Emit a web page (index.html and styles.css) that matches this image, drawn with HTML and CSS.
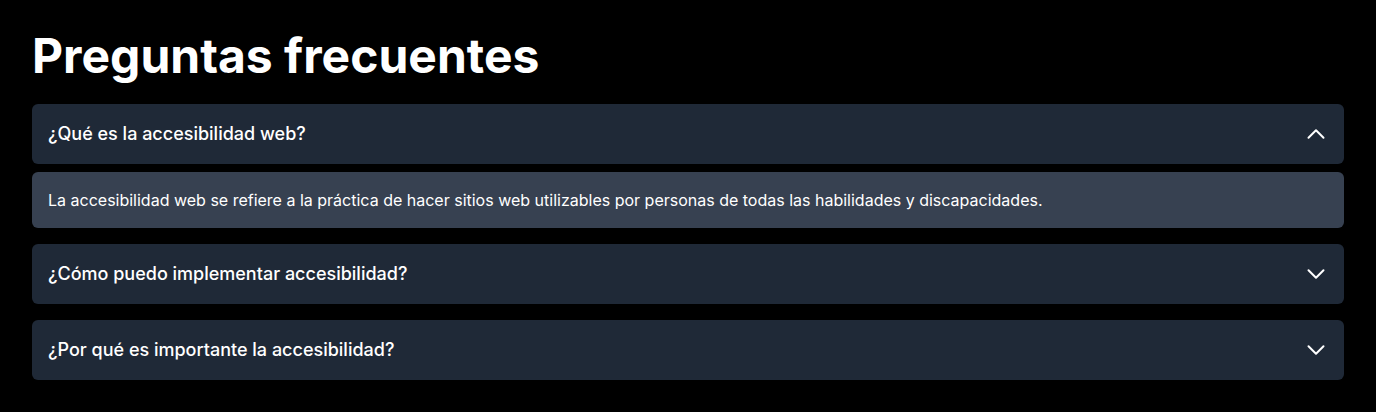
FILE: index.html
```html
<!DOCTYPE html>
<html lang="es">
<head>
<meta charset="utf-8">
<link rel="stylesheet" href="styles.css">
</head>
<body>
<main class="page">
  <h1 class="title">Preguntas frecuentes</h1>
  <div class="faq">
    <div class="item">
      <button class="question" aria-expanded="true">
        <span>¿Qué es la accesibilidad web?</span>
        <svg class="chev" viewBox="0 0 24 24" fill="none" stroke="currentColor" stroke-width="2" stroke-linecap="round" stroke-linejoin="round"><path d="M4.5 15.75l7.5-7.5 7.5 7.5"/></svg>
      </button>
      <div class="answer">La accesibilidad web se refiere a la práctica de hacer sitios web utilizables por personas de todas las habilidades y discapacidades.</div>
    </div>
    <div class="item">
      <button class="question" aria-expanded="false">
        <span>¿Cómo puedo implementar accesibilidad?</span>
        <svg class="chev" viewBox="0 0 24 24" fill="none" stroke="currentColor" stroke-width="2" stroke-linecap="round" stroke-linejoin="round"><path d="M19.5 8.25l-7.5 7.5-7.5-7.5"/></svg>
      </button>
    </div>
    <div class="item">
      <button class="question" aria-expanded="false">
        <span>¿Por qué es importante la accesibilidad?</span>
        <svg class="chev" viewBox="0 0 24 24" fill="none" stroke="currentColor" stroke-width="2" stroke-linecap="round" stroke-linejoin="round"><path d="M19.5 8.25l-7.5 7.5-7.5-7.5"/></svg>
      </button>
    </div>
  </div>
</main>
</body>
</html>
```
FILE: styles.css
```css
* { box-sizing: border-box; }
html, body { margin: 0; padding: 0; background: #000; }
body {
  font-family: Inter, "Noto Sans", sans-serif;
  color: #fff;
}
.page { padding: 32px; }
.title {
  margin: 0 0 24px;
  font-size: 48px;
  line-height: 48px;
  font-weight: 700;
}
.faq { display: flex; flex-direction: column; gap: 16px; }
.question {
  width: 100%;
  display: flex;
  align-items: center;
  justify-content: space-between;
  padding: 16px;
  border: 0;
  border-radius: 6px;
  background: #1f2937;
  color: #fff;
  font-family: inherit;
  font-size: 18px;
  line-height: 28px;
  font-weight: 500;
  text-align: left;
  cursor: pointer;
}
.chev { width: 24px; height: 24px; flex: none; }
.answer {
  margin-top: 8px;
  padding: 16px;
  border-radius: 6px;
  background: #374151;
  font-size: 16px;
  line-height: 24px;
}
```
